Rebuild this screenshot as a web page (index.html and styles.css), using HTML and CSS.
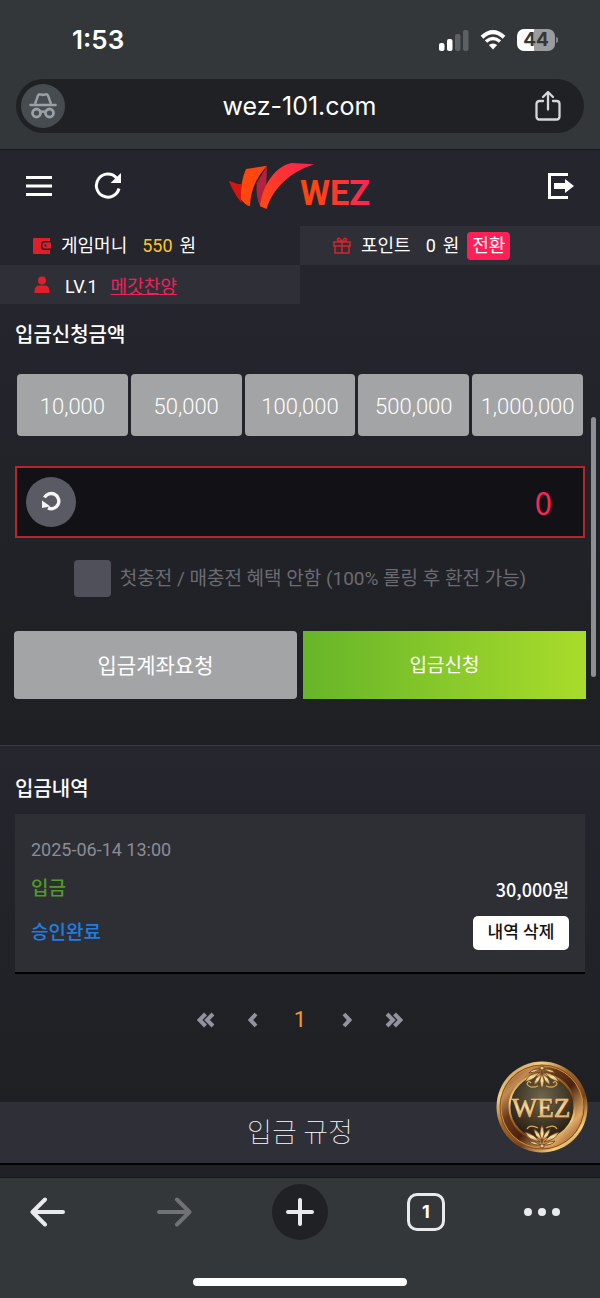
FILE: index.html
```html
<!DOCTYPE html>
<html lang="ko">
<head>
  <meta charset="UTF-8" />
  <meta name="viewport" content="width=device-width, initial-scale=1.0"/>
  <title>wez-101.com</title>
  <link rel="stylesheet" href="styles.css">
</head>
<body>

  <div class="browser-top">
    <div class="status">
      <span class="time">1:53</span>
      <div class="status-icons">
        <svg width="30" height="22" viewBox="0 0 30 22">
          <rect x="0" y="14" width="5.500" height="8" rx="2" fill="#fff"/>
          <rect x="8" y="10" width="5.500" height="12" rx="2" fill="#fff"/>
          <rect x="16" y="5" width="5.500" height="17" rx="2" fill="#5d6063"/>
          <rect x="24" y="1" width="5.500" height="21" rx="2" fill="#5d6063"/>
        </svg>
        <svg width="26" height="20" viewBox="0 0 26 20">
          <path d="M2 7.200 Q13 -3 24 7.200" fill="none" stroke="#fff" stroke-width="4"/>
          <path d="M6 11.500 Q13 5.500 20 11.500" fill="none" stroke="#fff" stroke-width="3.600"/>
          <path d="M13 19.500 L8.800 15 Q13 11.800 17.200 15 Z" fill="#fff"/>
        </svg>
        <div class="battery">44</div>
      </div>
    </div>
    <div class="url-bar">
      <button class="incognito" aria-label="Incognito">
        <svg width="28" height="28" viewBox="0 0 28 28" fill="none" stroke="#9aa0a6">
          <path d="M6 12 L9 3.500 Q10 1.500 12 2.500 L14 3 L16 2.500 Q18 1.500 19 3.500 L22 12" stroke-width="2.400"/>
          <path d="M1.500 13 H26.500" stroke-width="2.600" stroke-linecap="round"/>
          <circle cx="7.500" cy="21" r="4" stroke-width="2.800"/>
          <circle cx="20.500" cy="21" r="4" stroke-width="2.800"/>
          <path d="M11.500 20.500 Q14 18.500 16.500 20.500" stroke-width="2.400"/>
        </svg>
      </button>
      <span class="url">wez-101.com</span>
      <button class="share" aria-label="Share">
        <svg width="28" height="32" viewBox="0 0 28 32" fill="none" stroke="#d5d7da" stroke-width="2.300" stroke-linecap="round" stroke-linejoin="round">
          <path d="M9 11 H5.500 Q2.500 11 2.500 14 V26.500 Q2.500 29.500 5.500 29.500 H22.500 Q25.500 29.500 25.500 26.500 V14 Q25.500 11 22.500 11 H19"/>
          <path d="M14 19.500 V2.500 M9 7 L14 2 L19 7"/>
        </svg>
      </button>
    </div>
  </div>

  <main class="page">
    <header class="site-header">
      <div class="header-left">
        <button class="icon-btn" aria-label="메뉴">
          <svg width="26" height="26" viewBox="0 0 26 26" stroke="#fff" stroke-width="3"><path d="M0 4.500 H26 M0 13 H26 M0 21.500 H26"/></svg>
        </button>
        <button class="icon-btn" aria-label="새로고침">
          <svg width="28" height="28" viewBox="0 0 28 28">
            <path d="M22.500 6 A11.500 11.500 0 1 0 25 16.500" fill="none" stroke="#fff" stroke-width="3"/>
            <path d="M27 1 V11 H16.500 Z" fill="#fff"/>
          </svg>
        </button>
      </div>
      <a class="logo" href="#" aria-label="WEZ">
        <svg width="144" height="56" viewBox="29 24 432 168">
          <defs>
            <linearGradient id="swoosh" x1="0" y1="1" x2="1" y2="0">
              <stop offset="0" stop-color="#ff4a12"/>
              <stop offset="1" stop-color="#fb214f"/>
            </linearGradient>
            <linearGradient id="word" x1="0" y1="0" x2="1" y2="0">
              <stop offset="0.200" stop-color="#ff4510"/>
              <stop offset="1" stop-color="#f9235c"/>
            </linearGradient>
          </defs>
          <path d="M31 80 L50 87 Q59 91 69 89 V146 Q48 121 31 80 Z" fill="#d5150f"/>
          <path d="M146 35 L115 88 Q112 132 126 158 L143 125 Z" fill="#b2223d"/>
          <path d="M83 45 L146 35 C112 72 96 112 95 157 Q80 154 68 136 Q66 82 83 45 Z" fill="#ff470d"/>
          <path d="M125 157 C132 94 172 35 220 27 L288 31 C218 52 163 103 145 165 Z" fill="url(#swoosh)"/>
          <text class="logo-word" x="245" y="152" fill="url(#word)">WEZ</text>
        </svg>
      </a>
      <button class="icon-btn" aria-label="로그아웃">
        <svg width="26" height="26" viewBox="0 0 26 26">
          <path d="M20 1.500 H1.500 V24.500 H20" fill="none" stroke="#fff" stroke-width="3"/>
          <path d="M6 10 H17 V6 L26 13 L17 20 V16 H6 Z" fill="#fff"/>
        </svg>
      </button>
    </header>

    <div class="info">
      <div class="info-cell">
        <svg class="info-icon" width="18" height="16" viewBox="0 0 18 16">
          <path d="M0 1 Q0 0 1 0 H17 V3 H11 Q8 3 8 7.500 Q8 12 11 12 H17 V16 H1 Q0 16 0 15 Z M11 4.500 H18 V10.500 H11 Q9.500 10.500 9.500 7.500 Q9.500 4.500 11 4.500 Z" fill="#e11f29"/>
          <rect x="11.500" y="6.500" width="2" height="2" fill="#24252d"/>
        </svg>
        <span>게임머니</span>
        <span class="money">550</span>
        <span class="won">원</span>
      </div>
      <div class="info-cell shaded">
        <svg class="info-icon" width="18" height="17" viewBox="0 0 18 17" fill="none" stroke="#d5252d" stroke-width="1.500">
          <path d="M1 5 H17 V9 H1 Z M2 9 V16 H16 V9 M9 5 V16 M9 5 Q4 4 4.500 2 Q6.500 -0.500 9 5 Q11.500 -0.500 13.500 2 Q14 4 9 5"/>
        </svg>
        <span>포인트</span>
        <span class="point">0</span>
        <span class="won">원</span>
        <button class="convert">전환</button>
      </div>
      <div class="info-cell shaded">
        <svg class="info-icon" width="18" height="18" viewBox="0 0 18 18" fill="#e11f29">
          <circle cx="9" cy="4.500" r="4"/>
          <path d="M1.500 17 V15 Q2 9.500 6 9.500 H12 Q16 9.500 16.500 15 V17 Z"/>
        </svg>
        <span class="level">LV.1</span>
        <a class="nickname" href="#">메갓찬양</a>
      </div>
    </div>

    <section class="deposit">
      <h2><label for="amount">입금신청금액</label></h2>
      <div class="amounts">
        <button class="amount">10,000</button>
        <button class="amount">50,000</button>
        <button class="amount">100,000</button>
        <button class="amount">500,000</button>
        <button class="amount">1,000,000</button>
      </div>
      <div class="amount-box">
        <button class="reset" aria-label="초기화">
          <svg width="20" height="20" viewBox="0 0 20 20" fill="none" stroke="#f4f4f6" stroke-width="3.400">
            <path d="M3.500 6.500 A7.600 7.600 0 1 1 7 17"/>
            <path d="M1 9.500 L1 17 L9.500 15.500 Z" fill="#f4f4f6" stroke="none"/>
          </svg>
        </button>
        <input class="amount-input" id="amount" type="text" value="0">
      </div>
      <div class="bonus">
        <input class="check" id="bonus" type="checkbox">
        <label for="bonus">첫충전 / 매충전 혜택 안함 (100% 롤링 후 환전 가능)</label>
      </div>
      <div class="actions">
        <button class="action account">입금계좌요청</button>
        <button class="action submit">입금신청</button>
      </div>
    </section>

    <section class="history">
      <h2>입금내역</h2>
      <div class="card">
        <div class="date">2025-06-14 13:00</div>
        <div class="card-row">
          <span class="type">입금</span>
          <span class="sum">30,000원</span>
        </div>
        <div class="card-row">
          <span class="state">승인완료</span>
          <button class="delete">내역 삭제</button>
        </div>
      </div>
      <nav class="pager">
        <a href="#" aria-label="처음"><svg width="18" height="16" viewBox="0 0 18 16"><path d="M8.500 2 L2.500 8 L8.500 14 M16 2 L10 8 L16 14"/></svg></a>
        <a href="#" aria-label="이전"><svg width="10" height="16" viewBox="0 0 10 16"><path d="M8 2 L2.500 8 L8 14"/></svg></a>
        <a class="current" href="#">1</a>
        <a href="#" aria-label="다음"><svg width="10" height="16" viewBox="0 0 10 16"><path d="M2 2 L7.500 8 L2 14"/></svg></a>
        <a href="#" aria-label="마지막"><svg width="18" height="16" viewBox="0 0 18 16"><path d="M2 2 L8 8 L2 14 M9.500 2 L15.500 8 L9.500 14"/></svg></a>
      </nav>
    </section>

    <h3 class="rules">입금 규정</h3>

    <a class="medal" href="#" aria-label="WEZ">
      <svg width="92" height="92" viewBox="0 0 92 92">
        <defs>
          <linearGradient id="rim" x1="0.100" y1="0" x2="0.900" y2="1">
            <stop offset="0" stop-color="#b97c35"/>
            <stop offset="0.200" stop-color="#f1cf88"/>
            <stop offset="0.400" stop-color="#a4672a"/>
            <stop offset="0.650" stop-color="#7a431b"/>
            <stop offset="0.850" stop-color="#f3cf7c"/>
            <stop offset="1" stop-color="#9d5e22"/>
          </linearGradient>
          <linearGradient id="ring" x1="0" y1="0" x2="1" y2="1">
            <stop offset="0" stop-color="#6a351a"/>
            <stop offset="0.200" stop-color="#c08b52"/>
            <stop offset="0.350" stop-color="#6b3819"/>
            <stop offset="0.550" stop-color="#4a2210"/>
            <stop offset="0.780" stop-color="#e0a863"/>
            <stop offset="1" stop-color="#5a2c12"/>
          </linearGradient>
          <radialGradient id="face" cx="0.500" cy="0.350" r="0.650">
            <stop offset="0" stop-color="#6e664c"/>
            <stop offset="0.700" stop-color="#3b3222"/>
            <stop offset="1" stop-color="#241b12"/>
          </radialGradient>
          <linearGradient id="gold" x1="0" y1="0" x2="0" y2="1">
            <stop offset="0" stop-color="#c98f48"/>
            <stop offset="0.500" stop-color="#f9e2a6"/>
            <stop offset="1" stop-color="#b87830"/>
          </linearGradient>
        </defs>
        <circle cx="46" cy="46" r="45.500" fill="url(#rim)"/>
        <circle cx="46" cy="46" r="42.500" fill="#8b4f22"/>
        <circle cx="46" cy="46" r="41" fill="url(#ring)" stroke="#c8903f" stroke-width="1"/>
        <circle cx="46" cy="46" r="32.500" fill="url(#face)" stroke="url(#rim)" stroke-width="2"/>
        <g id="leaf" fill="url(#gold)" stroke="#6b431c" stroke-width="0.800">
          <path d="M46 64 Q50 71 46 82 Q42 71 46 64 Z"/>
          <path d="M46 80 Q48 71 54 68 Q54 75 46 80 Z"/>
          <path d="M46 80 Q44 71 38 68 Q38 75 46 80 Z"/>
          <path d="M48 81 Q54 73 63 71 Q60 79 48 81 Z"/>
          <path d="M44 81 Q38 73 29 71 Q32 79 44 81 Z"/>
          <path d="M47 84 Q54 80 59 80 Q55 85 47 84 Z"/>
          <path d="M45 84 Q38 80 33 80 Q37 85 45 84 Z"/>
          <circle cx="46" cy="85" r="2"/>
        </g>
        <use href="#leaf" transform="rotate(180 46 46)"/>
        <g fill="none" stroke="#d9a95e" stroke-width="1.200">
          <path d="M50 25 Q58 28 61 23 Q60 19 57 22 M42 25 Q34 28 31 23 Q32 19 35 22"/>
          <path d="M50 67 Q58 63 61 68 M42 67 Q34 63 31 68"/>
        </g>
        <text class="medal-word" x="46" y="57" text-anchor="middle" fill="#6a3414" stroke="#6a3414">WEZ</text>
        <text class="medal-word" x="45" y="56" text-anchor="middle" fill="url(#gold)" stroke="#f0cd8a">WEZ</text>
      </svg>
    </a>
    <div class="scroll-thumb"></div>
  </main>

  <div class="browser-bottom">
    <div class="toolbar">
      <button class="tool" aria-label="Back">
        <svg width="36" height="30" viewBox="0 0 36 30" fill="none" stroke="#e8eaed" stroke-width="4" stroke-linecap="round" stroke-linejoin="round"><path d="M33 15 H3 M15 2.500 L2.500 15 L15 27.500"/></svg>
      </button>
      <button class="tool" aria-label="Forward">
        <svg width="36" height="30" viewBox="0 0 36 30" fill="none" stroke="#707274" stroke-width="4" stroke-linecap="round" stroke-linejoin="round"><path d="M3 15 H33 M21 2.500 L33.500 15 L21 27.500"/></svg>
      </button>
      <button class="tool new-tab" aria-label="New tab">
        <svg width="30" height="30" viewBox="0 0 30 30" stroke="#e8eaed" stroke-width="4" stroke-linecap="round"><path d="M15 3 V27 M3 15 H27"/></svg>
      </button>
      <button class="tool" aria-label="Tabs"><span class="tab-count">1</span></button>
      <button class="tool more" aria-label="More">
        <svg width="36" height="8" viewBox="0 0 36 8" fill="#e8eaed"><circle cx="4" cy="4" r="4"/><circle cx="18" cy="4" r="4"/><circle cx="32" cy="4" r="4"/></svg>
      </button>
    </div>
    <div class="home-indicator"></div>
  </div>

</body>
</html>
```
FILE: styles.css
```css
* {
  box-sizing: border-box;
}

body {
  margin: 0;
  background: #343739;
  color: #fff;
  font-family: Roboto, "Noto Sans CJK KR", sans-serif;
  font-size: 18px;
  line-height: 24px;
}

button {
  padding: 0;
  border: none;
  background: none;
  color: inherit;
  font: inherit;
  cursor: pointer;
}

a {
  color: inherit;
  text-decoration: none;
}

svg {
  display: block;
}

h2 {
  margin: 0;
  padding: 0 15px;
  font-size: 20px;
  font-weight: 500;
}

/* browser chrome */
.browser-top {
  padding: 0 16px 16px;
  border-bottom: 1px solid #17181a;
  font-family: Inter, sans-serif;
}

.status {
  display: flex;
  justify-content: space-between;
  align-items: center;
  height: 79px;
  padding: 0 25px 0 56px;
}

.time {
  font-size: 26px;
  font-weight: 600;
}

.status-icons {
  display: flex;
  align-items: center;
  gap: 11px;
}

.battery {
  position: relative;
  width: 38px;
  height: 22px;
  margin-right: 4px;
  border-radius: 7px;
  background: linear-gradient(90deg, #fff 44%, #9b9c9e 44%);
  color: #343739;
  font-size: 19px;
  font-weight: 700;
  line-height: 22px;
  text-align: center;
}

.battery::after {
  content: "";
  position: absolute;
  top: 8px;
  right: -3px;
  width: 2px;
  height: 6px;
  border-radius: 0 2px 2px 0;
  background: #85878a;
}

.url-bar {
  display: flex;
  justify-content: space-between;
  align-items: center;
  height: 54px;
  padding: 0 22px 0 5px;
  border-radius: 27px;
  background: #202124;
}

.incognito {
  display: flex;
  justify-content: center;
  align-items: center;
  width: 44px;
  height: 44px;
  border-radius: 50%;
  background: #474c50;
}

.url {
  font-size: 25px;
}

/* site header */
.page {
  position: relative;
  padding-bottom: 12px;
  background: #202126;
}

.site-header {
  display: flex;
  justify-content: space-between;
  align-items: center;
  height: 76px;
  padding: 0 26px 4px;
  background: #24252d;
}

.header-left {
  display: flex;
  align-items: center;
  gap: 42px;
  flex: 1;
}

.site-header > .icon-btn {
  display: flex;
  justify-content: flex-end;
  flex: 1;
}

.logo {
  margin-top: 8px;
}

.logo-word {
  font-size: 103px;
  font-weight: 700;
}

.info {
  display: grid;
  grid-template-columns: 1fr 1fr;
  background: #24252d;
}

.info-cell {
  display: flex;
  align-items: center;
  height: 39px;
  padding-left: 33px;
}

.shaded {
  background: #2f3037;
}

.info-icon {
  margin-right: 10px;
}

.money {
  margin-left: 15px;
  color: #fdc42f;
}

.won {
  margin-left: 7px;
}

.point {
  margin-left: 15px;
}

.convert {
  width: 43px;
  height: 28px;
  margin-left: 8px;
  border-radius: 4px;
  background: #ff1f57;
}

.level,
.nickname {
  padding-top: 4px;
}

.level {
  margin-left: 4px;
}

.nickname {
  margin-left: 13px;
  color: #ee2259;
  text-decoration: underline;
}

/* deposit form */
.deposit {
  padding: 19px 0 46px;
  border-bottom: 1px solid #393b3f;
  background: linear-gradient(#24252d, #1f2023);
}

.amounts {
  display: grid;
  grid-template-columns: repeat(5, 1fr);
  gap: 3px;
  margin: 27px 17px 0;
}

.amount {
  height: 62px;
  padding-top: 3px;
  border-radius: 4px;
  background: #a3a4a6;
  font-size: 22px;
  font-weight: 300;
}

.amount-box {
  display: flex;
  align-items: center;
  height: 72px;
  margin: 30px 15px 0;
  padding: 0 31px 0 9px;
  border: 2px solid #b6252a;
  background: #121216;
}

.reset {
  display: flex;
  flex-shrink: 0;
  justify-content: center;
  align-items: center;
  width: 50px;
  height: 50px;
  padding-bottom: 2px;
  border-radius: 50%;
  background: #5a5a64;
}

.amount-input {
  flex: 1;
  min-width: 0;
  padding: 0;
  border: none;
  outline: none;
  background: none;
  color: #ff2358;
  font-family: "Noto Sans CJK KR", sans-serif;
  font-size: 31px;
  line-height: 40px;
  text-align: right;
}

.bonus {
  display: flex;
  justify-content: center;
  align-items: center;
  gap: 9px;
  margin-top: 22px;
  color: #6b6b73;
  font-size: 19px;
}

.check {
  appearance: none;
  width: 37px;
  height: 37px;
  margin: 0;
  border-radius: 4px;
  background: #50505a;
}

.actions {
  display: grid;
  grid-template-columns: 1fr 1fr;
  gap: 6px;
  margin: 34px 14px 0;
}

.action {
  height: 68px;
  padding-top: 2px;
}

.account {
  border-radius: 4px;
  background: #a3a4a6;
  font-size: 21px;
}

.submit {
  background: linear-gradient(90deg, #66b529, #a9dc2b);
  font-size: 19px;
}

/* deposit history */
.history {
  padding: 31px 0 70px;
  background: linear-gradient(#25262e, #1f2023);
}

.card {
  display: flex;
  flex-direction: column;
  gap: 15px;
  margin: 13px 15px 0;
  padding: 24px 16px 22px;
  border-bottom: 2px solid #000;
  background: #2e2f34;
}

.card-row {
  display: flex;
  justify-content: space-between;
  align-items: center;
  font-weight: 500;
}

.date {
  color: #8b8c95;
}

.type,
.state {
  font-size: 19px;
}

.type {
  color: #509a27;
}

.state {
  color: #207de5;
}

.sum {
  font-family: "Noto Sans CJK KR", sans-serif;
}

.delete {
  width: 96px;
  height: 34px;
  padding-bottom: 2px;
  border-radius: 5px;
  background: #fff;
  color: #111;
  font-size: 17px;
}

.pager {
  display: flex;
  justify-content: center;
  margin-top: 34px;
  font-size: 22px;
}

.pager a {
  display: flex;
  justify-content: center;
  align-items: center;
  width: 47px;
  height: 24px;
}

.pager path {
  fill: none;
  stroke: #9293a0;
  stroke-width: 4;
}

.pager .current {
  color: #fb9a1d;
}

.rules {
  margin: 0;
  padding: 16px 0 14px;
  border-bottom: 2px solid #000;
  background: #2e2f37;
  font-size: 27px;
  font-weight: 100;
  line-height: 31px;
  text-align: center;
}

/* floating over the page */
.medal {
  position: absolute;
  right: 12px;
  bottom: 24px;
}

.medal-word {
  font-family: "Liberation Serif", serif;
  font-size: 27px;
  stroke-width: 0.6px;
}

.scroll-thumb {
  position: absolute;
  top: 267px;
  right: 4px;
  width: 5px;
  height: 260px;
  border-radius: 3px;
  background: #8e8e93;
}

/* bottom toolbar */
.browser-bottom {
  padding: 6px 20px 12px;
  border-top: 1px solid #17181a;
}

.toolbar {
  display: flex;
  justify-content: space-between;
}

.tool {
  display: flex;
  justify-content: center;
  align-items: center;
  width: 56px;
  height: 56px;
}

.new-tab {
  border-radius: 50%;
  background: #202124;
}

.tab-count {
  width: 38px;
  height: 38px;
  border: 3px solid #e8eaed;
  border-radius: 10px;
  font-family: Inter, sans-serif;
  font-weight: 700;
  line-height: 32px;
}

.more {
  justify-content: flex-start;
}

.home-indicator {
  width: 214px;
  height: 8px;
  margin: 38px auto 0;
  border-radius: 4px;
  background: #fff;
}
```
